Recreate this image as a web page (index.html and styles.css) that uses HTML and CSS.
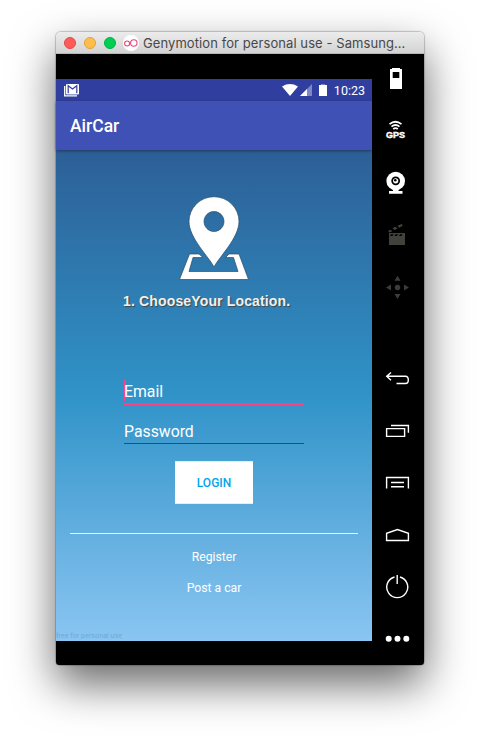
FILE: index.html
```html
<!DOCTYPE html>
<html lang="en">
<head>
<meta charset="utf-8">
<title>AirCar</title>
<link rel="stylesheet" href="styles.css">
</head>
<body>
<main class="window">
  <header class="titlebar">
    <i class="light red"></i><i class="light yellow"></i><i class="light green"></i>
    <svg class="logo" width="16" height="16" viewBox="0 0 16 16"><circle cx="8" cy="8" r="8" fill="#fff"/><g fill="none" stroke="#e6487c" stroke-width="1.1"><circle cx="4.1" cy="8.5" r="2.5"/><circle cx="10.800" cy="8" r="3.2"/></g></svg>
    <span class="title">Genymotion for personal use - Samsung…</span>
  </header>
  <div class="emulator">
    <section class="screen">
      <div class="status">
        <svg class="mail" width="16" height="13" viewBox="0 0 16 13"><path d="M.7 2v9.800h12.300" fill="none" stroke="#fff" stroke-width="1.300"/><path fill="#fff" d="M3 0h11q1 0 1 1v8.500q0 1-1 1H3q-1 0-1-1V1q0-1 1-1z"/><path d="M4.200 9.200V1.800L8.500 5l4.300-3.200v7.400" fill="none" stroke="#303f9f" stroke-width="1.200"/></svg>
        <span class="spacer"></span>
        <svg width="46" height="13" viewBox="0 0 46 13"><path fill="#fff" d="M0 2.500Q8-2.400 16 2.500L8 12z"/><path fill="#8087c2" d="M30 0v12H18z"/><path fill="#fff" d="M25 5v7h-7z"/><path fill="#8087c2" d="M39 0h4v1h-4z"/><path fill="#fff" d="M37 1h8v11h-8z"/></svg>
        <span class="clock">10:23</span>
      </div>
      <div class="appbar">AirCar</div>
      <div class="content">
        <svg class="pin" width="70" height="85" viewBox="0 0 70 85"><g fill="#fff" stroke="#294e68" stroke-width=".7"><path d="M10.500 58H20L24 61.500H14L10 75.500h49L54.500 61.500H46.500L50 58H60L69.500 83.500H.500z"/><path fill-rule="evenodd" d="M35 71C30 61 10 42 10 25.500a25 24.800 0 0 1 50 0C60 42 40 61 35 71zM35 15.500a10 10 0 1 0 .01 0z"/></g></svg>
        <div class="caption">1. ChooseYour Location.</div>
        <form class="login">
          <div class="field active">Email</div>
          <div class="field">Password</div>
          <button type="button" class="submit">LOGIN</button>
        </form>
        <nav class="links"><a>Register</a><a>Post a car</a></nav>
        <small class="license">free for personal use</small>
      </div>
    </section>
    <aside class="tools">
      <svg viewBox="0 0 26 24"><path fill="#fff" fill-rule="evenodd" d="M7 1h8v1h2v20H5V2h2zM7.700 5v6h6.600V5z"/></svg>
      <svg viewBox="0 0 26 24"><g fill="none" stroke="#fff" stroke-width="1.700"><path d="M4.500 5.200q6-4.900 12 0M6.500 7.700q4-3.400 8 0M8.200 10q2.300-1.900 4.600 0"/></g><text x="1" y="19" textLength="19" lengthAdjust="spacingAndGlyphs" class="gps">GPS</text></svg>
      <svg viewBox="0 0 26 24"><circle cx="10.700" cy="10" r="9.300" fill="#fff"/><path fill="#fff" d="M8 18h5.500v2H17.500v2.800H4V20h4z"/><circle cx="10.700" cy="9.800" r="4.400"/><circle cx="10.700" cy="9.800" r="2.600" fill="#fff"/><circle cx="10.300" cy="9.300" r="1.300"/></svg>
      <svg viewBox="0 0 26 24"><g fill="#42423d"><path fill-rule="evenodd" d="M4 10h16v12H4zM6 11.200 5 13h2.500l1-1.800zM10.500 11.200l-1 1.800H12l1-1.800zM15 11.200 14 13h2.500l1-1.800z"/><path d="M3.200 7.800 6 6.700 7 8.400 4 9.600zM7.500 5.200l3-1.500 2 1.900-3 1.400zM12.500 2.800l4.200-1.800 1 1.800-3.700 2z"/></g></svg>
      <svg viewBox="0 0 26 24"><g fill="#3c3c3a"><circle cx="12.500" cy="12.500" r="2.700"/><path d="M12.500 .7l3 5h-6zM12.500 24l3-5h-6zM1 12.500l5-3v6zM24 12.500l-5-3v6z"/></g></svg>
      <svg class="navigation" viewBox="0 0 26 24"><path d="M6 5.500 1.700 9.300 6 13.200M2 9.300H20.500Q23.300 9.500 23.300 13T20.500 16.500H11.500"/></svg>
      <svg viewBox="0 0 26 24"><path d="M1.600 9.600h18v7.800h-18zM6 6.500h17.400v7.200"/></svg>
      <svg viewBox="0 0 26 24"><path d="M1.600 17.500V6.500h21.800v11M6 11.500h13M6 15.700h13"/></svg>
      <svg viewBox="0 0 26 24"><path d="M1.600 17.500v-7.200L12.500 6.500l10.900 3.800v7.200z"/></svg>
      <svg viewBox="0 0 26 24"><path d="M9.500 2a10.500 10.500 0 1 0 5.500 0M12.200 0v9"/></svg>
      <svg viewBox="0 0 26 24"><g fill="#fff"><circle cx="3.700" cy="11.800" r="3"/><circle cx="12.500" cy="11.800" r="3"/><circle cx="21.300" cy="11.800" r="3"/></g></svg>
    </aside>
  </div>
</main>
</body>
</html>
```
FILE: styles.css
```css
body {
  margin: 0;
  padding: 32px 56px 80px;
  background: #fff;
  font-family: Roboto, "Liberation Sans", sans-serif;
  overflow: hidden;
}
.window {
  width: 368px;
  height: 633px;
  border-radius: 5px 5px 4px 4px;
  box-shadow: 0 0 1px 1px rgba(0, 0, 0, .2), 0 19px 44px rgba(0, 0, 0, .6);
}
.titlebar {
  box-sizing: border-box;
  height: 22px;
  display: flex;
  align-items: center;
  padding-left: 8px;
  border-bottom: 1px solid #b5b5b5;
  border-radius: 5px 5px 0 0;
  background: linear-gradient(#ececec, #d3d3d3);
}
.light {
  box-sizing: border-box;
  width: 12px;
  height: 12px;
  margin-right: 8px;
  border-radius: 50%;
}
.red { background: #ff5b59; border: 1px solid #e5484a; }
.yellow { background: #ffbd4c; border: 1px solid #e2a13c; }
.green { background: #00ce53; border: 1px solid #00b248; }
.logo { margin: 1px 4px 0 -1px; }
.title {
  font: 13px/20px Inter, sans-serif;
  letter-spacing: .08px;
  color: #484848;
  white-space: nowrap;
}
.emulator {
  display: flex;
  height: 611px;
  background: #000;
  border-radius: 0 0 3px 3px;
}
.screen {
  width: 316px;
  height: 562px;
  margin-top: 25px;
  display: flex;
  flex-direction: column;
  color: #fff;
}
.status {
  box-sizing: border-box;
  height: 22px;
  display: flex;
  align-items: center;
  padding: 0 7px 0 8px;
  background: #303f9f;
}
.spacer { flex: 1; }
.clock {
  margin-left: 6px;
  font-size: 12.5px;
  line-height: 22px;
  padding-top: 1px;
}
.appbar {
  height: 49px;
  padding-left: 14px;
  background: #3f51b5;
  box-shadow: 0 1px 3px rgba(0, 0, 0, .4);
  font-size: 17.5px;
  font-weight: 500;
  line-height: 51px;
  z-index: 1;
}
.content {
  flex: 1;
  display: flex;
  flex-direction: column;
  background: linear-gradient(#2c5f96, #3093c8 50%, #8ac5f2);
}
.pin { margin: 46px 0 0 123px; }
.caption {
  margin: 12px 0 0 67px;
  font: bold 14px/16px "Liberation Sans", sans-serif;
  letter-spacing: .15px;
  white-space: nowrap;
  color: #f0f0f0;
  text-shadow: 1px 1px 1px #444;
}
.login {
  width: 180px;
  margin: 71px 0 0 68px;
  display: flex;
  flex-direction: column;
  align-items: center;
}
.field {
  box-sizing: border-box;
  width: 180px;
  height: 39px;
  border-bottom: 1px solid #24506d;
  font-size: 15.8px;
  line-height: 28px;
  padding-top: 13px;
}
.field.active {
  height: 25px;
  padding: 0;
  line-height: 24px;
  border-bottom: 2px solid #ff4081;
  background: linear-gradient(#ff4081, #ff4081) 0 0 / 2px 21px no-repeat;
}
.submit {
  width: 78px;
  height: 43px;
  margin-top: 17px;
  padding: 0;
  border: 1px solid #e3eef5;
  border-width: 1px 0;
  background: #fff;
  color: #03a4ec;
  font: 500 12px Roboto, sans-serif;
}
.links {
  margin: 29px 14px 0;
  padding-top: 8px;
  border-top: 1px solid #e7f6fb;
  display: flex;
  flex-direction: column;
  align-items: center;
  font-size: 12.2px;
  line-height: 30.5px;
}
.license {
  margin: auto 0 0;
  font-size: 7.2px;
  line-height: 10px;
  color: #70a9d3;
}
.tools {
  width: 39px;
  padding: 13px 0 0 13px;
  display: flex;
  flex-direction: column;
  gap: 28px;
}
.tools svg {
  width: 26px;
  height: 24px;
  fill: none;
  stroke-width: 1.4;
}
.tools svg circle:not([fill]) { fill: #000; }
.tools svg g circle:not([fill]) { fill: inherit; }
.tools svg > path:not([fill]) { stroke: #fff; }
.tools .navigation { margin-top: 40px; }
.gps {
  fill: #fff;
  font: bold 8.5px "Liberation Sans", sans-serif;
  stroke: #fff;
  stroke-width: .4;
}
```
